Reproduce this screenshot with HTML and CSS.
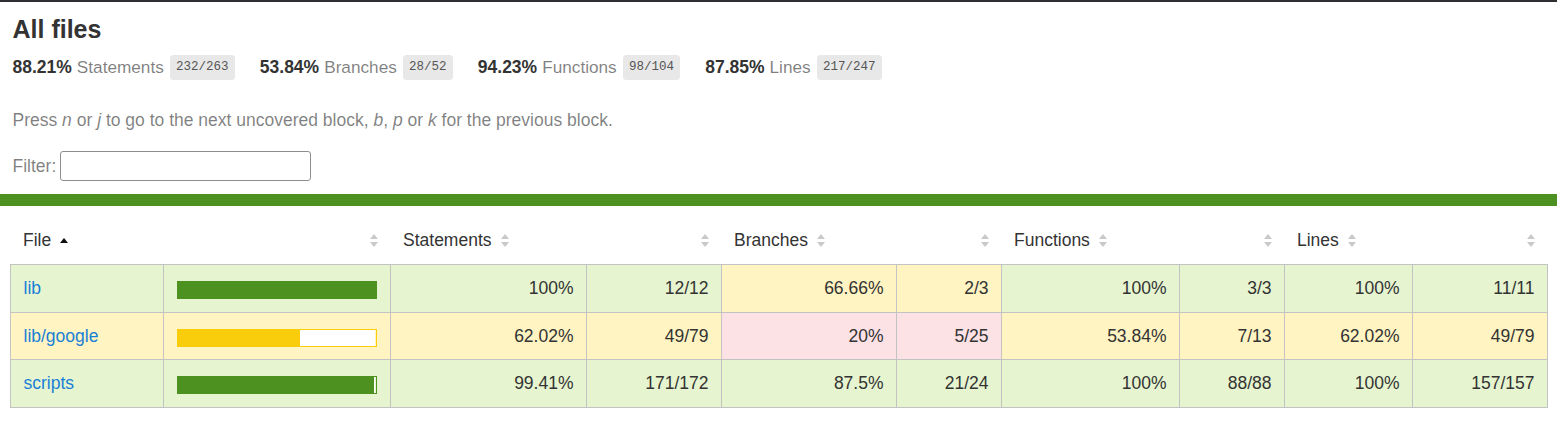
FILE: index.html
```html
<!doctype html>
<html lang="en">
<head>
<meta charset="utf-8">
<title>Code coverage report for All files</title>
<link rel="stylesheet" href="styles.css">
</head>
<body>
<div class="wrapper">
  <div class="head">
    <h1 class="title">All files</h1>
    <div class="stats">
      <div class="stat"><span class="strong">88.21%</span><span class="quiet">Statements</span><span class="fraction">232/263</span></div>
      <div class="stat"><span class="strong">53.84%</span><span class="quiet">Branches</span><span class="fraction">28/52</span></div>
      <div class="stat"><span class="strong">94.23%</span><span class="quiet">Functions</span><span class="fraction">98/104</span></div>
      <div class="stat"><span class="strong">87.85%</span><span class="quiet">Lines</span><span class="fraction">217/247</span></div>
    </div>
    <p class="quiet hint">Press <em>n</em> or <em>j</em> to go to the next uncovered block, <em>b</em>, <em>p</em> or <em>k</em> for the previous block.</p>
    <div class="quiet filter">
      <span>Filter:</span>
      <input type="search" class="search" aria-label="Filter">
    </div>
  </div>
  <div class="status-line high"></div>
  <div class="body-pad">
    <table class="coverage-summary">
      <colgroup>
        <col class="c-file"><col class="c-pic"><col class="c-spct"><col class="c-sabs"><col class="c-bpct"><col class="c-babs"><col class="c-fpct"><col class="c-fabs"><col class="c-lpct"><col class="c-labs">
      </colgroup>
      <thead>
        <tr>
          <th class="file sorted"><span class="th-in">File<span class="sorter"></span></span></th>
          <th class="pic"><span class="th-in"><span class="sorter"></span></span></th>
          <th class="pct"><span class="th-in">Statements<span class="sorter"></span></span></th>
          <th class="abs"><span class="th-in"><span class="sorter"></span></span></th>
          <th class="pct"><span class="th-in">Branches<span class="sorter"></span></span></th>
          <th class="abs"><span class="th-in"><span class="sorter"></span></span></th>
          <th class="pct"><span class="th-in">Functions<span class="sorter"></span></span></th>
          <th class="abs"><span class="th-in"><span class="sorter"></span></span></th>
          <th class="pct"><span class="th-in">Lines<span class="sorter"></span></span></th>
          <th class="abs"><span class="th-in"><span class="sorter"></span></span></th>
        </tr>
      </thead>
      <tbody>
        <tr>
          <td class="file high"><a href="#">lib</a></td>
          <td class="pic high"><div class="chart"><div class="cover-fill" style="width:100%"></div><div class="cover-empty" style="width:0%"></div></div></td>
          <td class="pct high">100%</td>
          <td class="abs high">12/12</td>
          <td class="pct medium">66.66%</td>
          <td class="abs medium">2/3</td>
          <td class="pct high">100%</td>
          <td class="abs high">3/3</td>
          <td class="pct high">100%</td>
          <td class="abs high">11/11</td>
        </tr>
        <tr>
          <td class="file medium"><a href="#">lib/google</a></td>
          <td class="pic medium"><div class="chart"><div class="cover-fill" style="width:62%"></div><div class="cover-empty" style="width:38%"></div></div></td>
          <td class="pct medium">62.02%</td>
          <td class="abs medium">49/79</td>
          <td class="pct low">20%</td>
          <td class="abs low">5/25</td>
          <td class="pct medium">53.84%</td>
          <td class="abs medium">7/13</td>
          <td class="pct medium">62.02%</td>
          <td class="abs medium">49/79</td>
        </tr>
        <tr>
          <td class="file high"><a href="#">scripts</a></td>
          <td class="pic high"><div class="chart"><div class="cover-fill" style="width:99%"></div><div class="cover-empty" style="width:1%"></div></div></td>
          <td class="pct high">99.41%</td>
          <td class="abs high">171/172</td>
          <td class="pct high">87.5%</td>
          <td class="abs high">21/24</td>
          <td class="pct high">100%</td>
          <td class="abs high">88/88</td>
          <td class="pct high">100%</td>
          <td class="abs high">157/157</td>
        </tr>
      </tbody>
    </table>
  </div>
</div>
</body>
</html>
```

FILE: styles.css
```css
*, *::before, *::after { box-sizing: border-box; }

html, body { margin: 0; padding: 0; }

body {
  font-family: "Liberation Sans", Arial, Helvetica, sans-serif;
  font-size: 17.5px;
  color: #333;
  background: #fff;
  border-top: 2px solid #2f2f33;
}

.head {
  padding: 12.5px 12.5px 13px;
}

.title {
  font-size: 25px;
  line-height: 28px;
  margin: 0;
  font-weight: bold;
}

.stats {
  display: flex;
  padding: 12px 0 13px;
}

.stat {
  display: flex;
  align-items: center;
  gap: 5px;
  padding-right: 25px;
  line-height: 20px;
}

.stat .quiet { font-size: 17.2px; }

.strong { font-weight: bold; }

.quiet { color: rgba(0, 0, 0, 0.5); }

.fraction {
  font-family: "Liberation Mono", "DejaVu Sans Mono", monospace;
  font-size: 12.5px;
  line-height: 15px;
  color: #555;
  background: #e8e8e8;
  padding: 5px 6.25px;
  border-radius: 3.5px;
  margin-left: 1px;
}

.hint {
  margin: 17.5px 0 0;
  line-height: 20px;
}

.filter {
  display: flex;
  align-items: center;
  gap: 4px;
  margin-top: 21px;
  height: 30px;
}

.search {
  width: 251px;
  height: 30px;
  border: 1px solid #8d8d8d;
  border-radius: 3px;
  background: #fff;
  font-size: 16px;
  padding: 2px 4px;
  margin: 0;
}

.status-line {
  height: 12px;
}
.status-line.high { background: rgb(77, 146, 33); }

.body-pad {
  padding: 12px 10px 20px;
}

.coverage-summary {
  border-collapse: collapse;
  width: 100%;
  table-layout: fixed;
}

.c-file { width: 153px; }
.c-pic { width: 227px; }
.c-spct { width: 196px; }
.c-sabs { width: 135px; }
.c-bpct { width: 175px; }
.c-babs { width: 105px; }
.c-fpct { width: 178px; }
.c-fabs { width: 105px; }
.c-lpct { width: 128px; }
.c-labs { width: 135px; }

.coverage-summary th {
  font-weight: normal;
  text-align: left;
  white-space: nowrap;
  padding: 12px 12.5px 14px;
  line-height: 20px;
}

.coverage-summary th.pic,
.coverage-summary th.abs { text-align: right; }

.th-in {
  display: inline-flex;
  align-items: center;
  gap: 8.75px;
  vertical-align: top;
  height: 20px;
}

.sorter {
  display: inline-flex;
  flex-direction: column;
  justify-content: space-between;
  align-items: center;
  width: 9px;
  height: 13px;
}

.sorter::before,
.sorter::after {
  content: "";
  display: block;
  width: 0;
  height: 0;
  border-left: 4.5px solid transparent;
  border-right: 4.5px solid transparent;
}

.sorter::before { border-bottom: 5.5px solid #c9c9c9; }
.sorter::after { border-top: 5.5px solid #c9c9c9; }

.sorted .sorter { justify-content: center; }
.sorted .sorter::before { border-bottom-color: #111; }
.sorted .sorter::after { display: none; }

.coverage-summary tbody { border: 1px solid #c3c3c3; }
.coverage-summary tbody tr { border-bottom: 1px solid #c3c3c3; }

.coverage-summary td {
  padding: 12.25px 12.5px;
  line-height: 22px;
  border-right: 1px solid #c3c3c3;
  white-space: nowrap;
}
.coverage-summary td:last-child { border-right: none; }

.coverage-summary td.pct,
.coverage-summary td.abs { text-align: right; }

.coverage-summary td.pic { padding: 12.25px 13.5px 12.25px 13px; }

.coverage-summary a {
  color: #1a7fd6;
  text-decoration: none;
}

.high { background: rgb(230, 245, 208); }
.medium { background: #fff4c2; }
.low { background: #fce1e5; }

.chart {
  display: flex;
  height: 18px;
  margin-top: 3.5px;
  line-height: 0;
}
.high .chart { border: 1px solid rgb(77, 146, 33); }
.medium .chart { border: 1px solid #f9cd0b; }

.cover-fill { height: 100%; }
.high .cover-fill { background: rgb(77, 146, 33); }
.medium .cover-fill { background: #f9cd0b; }
.cover-empty { height: 100%; background: #fff; }
```
